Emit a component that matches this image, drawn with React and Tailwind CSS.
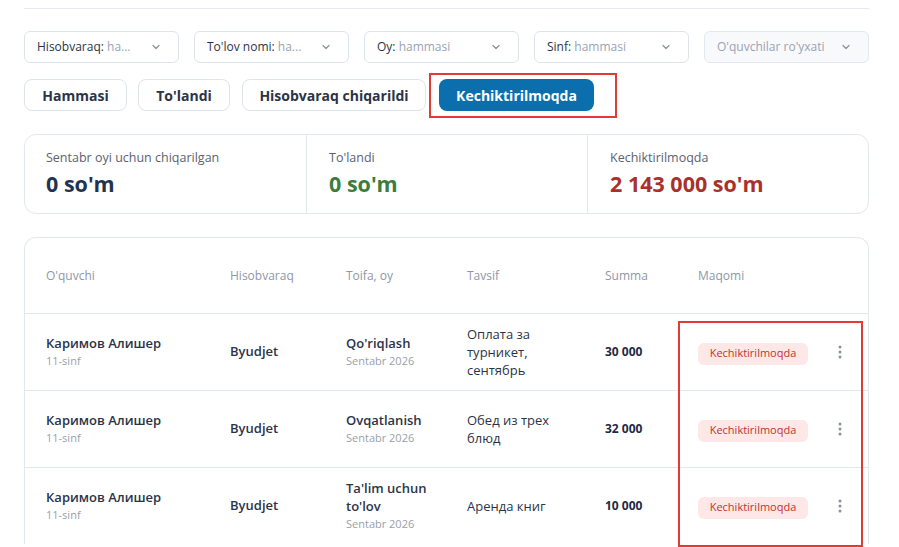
import React from "react";

const filters = [
  { label: "Hisobvaraq:", value: "ha..." },
  { label: "To'lov nomi:", value: "ha..." },
  { label: "Oy:", value: "hammasi" },
  { label: "Sinf:", value: "hammasi" },
];

const rows = [
  { toifa: "Qo'riqlash", tavsif: "Оплата за турникет, сентябрь", summa: "30 000" },
  { toifa: "Ovqatlanish", tavsif: "Обед из трех блюд", summa: "32 000" },
  { toifa: "Ta'lim uchun to'lov", tavsif: "Аренда книг", summa: "10 000" },
];

function Chevron() {
  return (
    <svg width="12" height="12" viewBox="0 0 24 24" fill="none" stroke="#8a93a6" strokeWidth="2.5" strokeLinecap="round" strokeLinejoin="round">
      <path d="M6 9l6 6 6-6" />
    </svg>
  );
}

function Dots() {
  return (
    <svg width="4" height="14" viewBox="0 0 4 14" fill="#8a90a0">
      <circle cx="2" cy="2" r="1.5" />
      <circle cx="2" cy="7" r="1.5" />
      <circle cx="2" cy="12" r="1.5" />
    </svg>
  );
}

export default function App() {
  return (
    <div className="bg-white min-h-[547px] pl-6 pt-2 text-[#2b3447]" style={{ fontFamily: '"Open Sans", "Noto Sans", sans-serif' }}>
      <div className="w-[845px]">
        <div className="border-t border-[#e6e9ef]" />

        {/* filters */}
        <div className="flex gap-[15px] mt-[22px]">
          {filters.map((f) => (
            <div key={f.label} className="w-[155px] h-8 flex items-center justify-between px-3 border border-[#dfe3ea] rounded-md text-[12px]">
              <span>
                {f.label} <span className="text-[#9aa3b5]">{f.value}</span>
              </span>
              <span className="mr-1"><Chevron /></span>
            </div>
          ))}
          <div className="flex-1 h-8 flex items-center justify-between px-3 border border-[#e3e7ee] bg-[#f8f9fb] rounded-md text-[12px] text-[#9aa3b5]">
            <span>O'quvchilar ro'yxati</span>
            <span className="mr-1"><Chevron /></span>
          </div>
        </div>

        {/* tabs */}
        <div className="flex items-center mt-4 text-[14px] font-bold">
          <button className="h-8 w-[103px] border border-[#dfe3ea] rounded-lg">Hammasi</button>
          <button className="h-8 w-[92px] ml-[11px] border border-[#dfe3ea] rounded-lg">To'landi</button>
          <button className="h-8 w-[184px] ml-3 border border-[#dfe3ea] rounded-lg">Hisobvaraq chiqarildi</button>
          <div className="relative ml-[13px]">
            <button className="h-8 w-[155px] bg-[#0b6fae] text-white rounded-lg">Kechiktirilmoqda</button>
            <span className="absolute -left-[10px] -top-[6px] w-[188px] h-[45px] border-2 border-[#e23b35] pointer-events-none" />
          </div>
        </div>

        {/* stats */}
        <div className="mt-[23px] h-20 grid grid-cols-3 border border-[#e3e7ee] rounded-xl">
          <div className="pl-[21px] pt-[14px]">
            <div className="text-[12.5px] text-[#5b6270]">Sentabr oyi uchun chiqarilgan</div>
            <div className="text-[21.5px] font-bold text-[#1f3352] leading-7 mt-[2px]">0 so'm</div>
          </div>
          <div className="pl-[22px] pt-[14px] border-l border-[#e3e7ee]">
            <div className="text-[12.5px] text-[#5b6270]">To'landi</div>
            <div className="text-[21.5px] font-bold text-[#3b7d3b] leading-7 mt-[2px]">0 so'm</div>
          </div>
          <div className="pl-[22px] pt-[14px] border-l border-[#e3e7ee]">
            <div className="text-[12.5px] text-[#5b6270]">Kechiktirilmoqda</div>
            <div className="text-[21.5px] font-bold text-[#a8322b] leading-7 mt-[2px]">2 143 000 so'm</div>
          </div>
        </div>

        {/* table */}
        <div className="relative mt-[23px] border border-b-0 border-[#e3e7ee] rounded-t-xl">
          <div className="h-[75px] pl-[21px] grid grid-cols-[184px_116px_121px_138px_93px_140px_auto] items-center text-[12px] font-medium text-[#8f97a8]">
            <div>O'quvchi</div>
            <div>Hisobvaraq</div>
            <div>Toifa, oy</div>
            <div>Tavsif</div>
            <div>Summa</div>
            <div>Maqomi</div>
            <div />
          </div>
          {rows.map((r) => (
            <div key={r.toifa} className="h-[77px] pl-[21px] border-t border-[#e3e7ee] grid grid-cols-[184px_116px_121px_138px_93px_140px_auto] items-center">
              <div>
                <div className="text-[13px] font-semibold leading-[18px]">Каримов Алишер</div>
                <div className="text-[11px] text-[#9aa0aa] leading-[18px]">11-sinf</div>
              </div>
              <div className="text-[13px] font-semibold">Byudjet</div>
              <div className="max-w-[95px]">
                <div className="text-[13px] font-semibold leading-[18px]">{r.toifa}</div>
                <div className="text-[11px] text-[#9aa0aa] leading-[18px]">Sentabr 2026</div>
              </div>
              <div className="max-w-[105px] text-[13px] font-medium leading-[18px]">{r.tavsif}</div>
              <div className="text-[12px] font-bold text-[#1f2a44]">{r.summa}</div>
              <div>
                <span className="inline-flex items-center justify-center w-[110px] h-[22px] rounded-md bg-[#fde7e7] text-[11px] text-[#c0352d]">
                  Kechiktirilmoqda
                </span>
              </div>
              <div className="flex items-center"><Dots /></div>
            </div>
          ))}
          <span className="absolute left-[653px] top-[83px] w-[185px] h-[226px] border-2 border-[#e23b35] pointer-events-none" />
        </div>
      </div>
    </div>
  );
}
